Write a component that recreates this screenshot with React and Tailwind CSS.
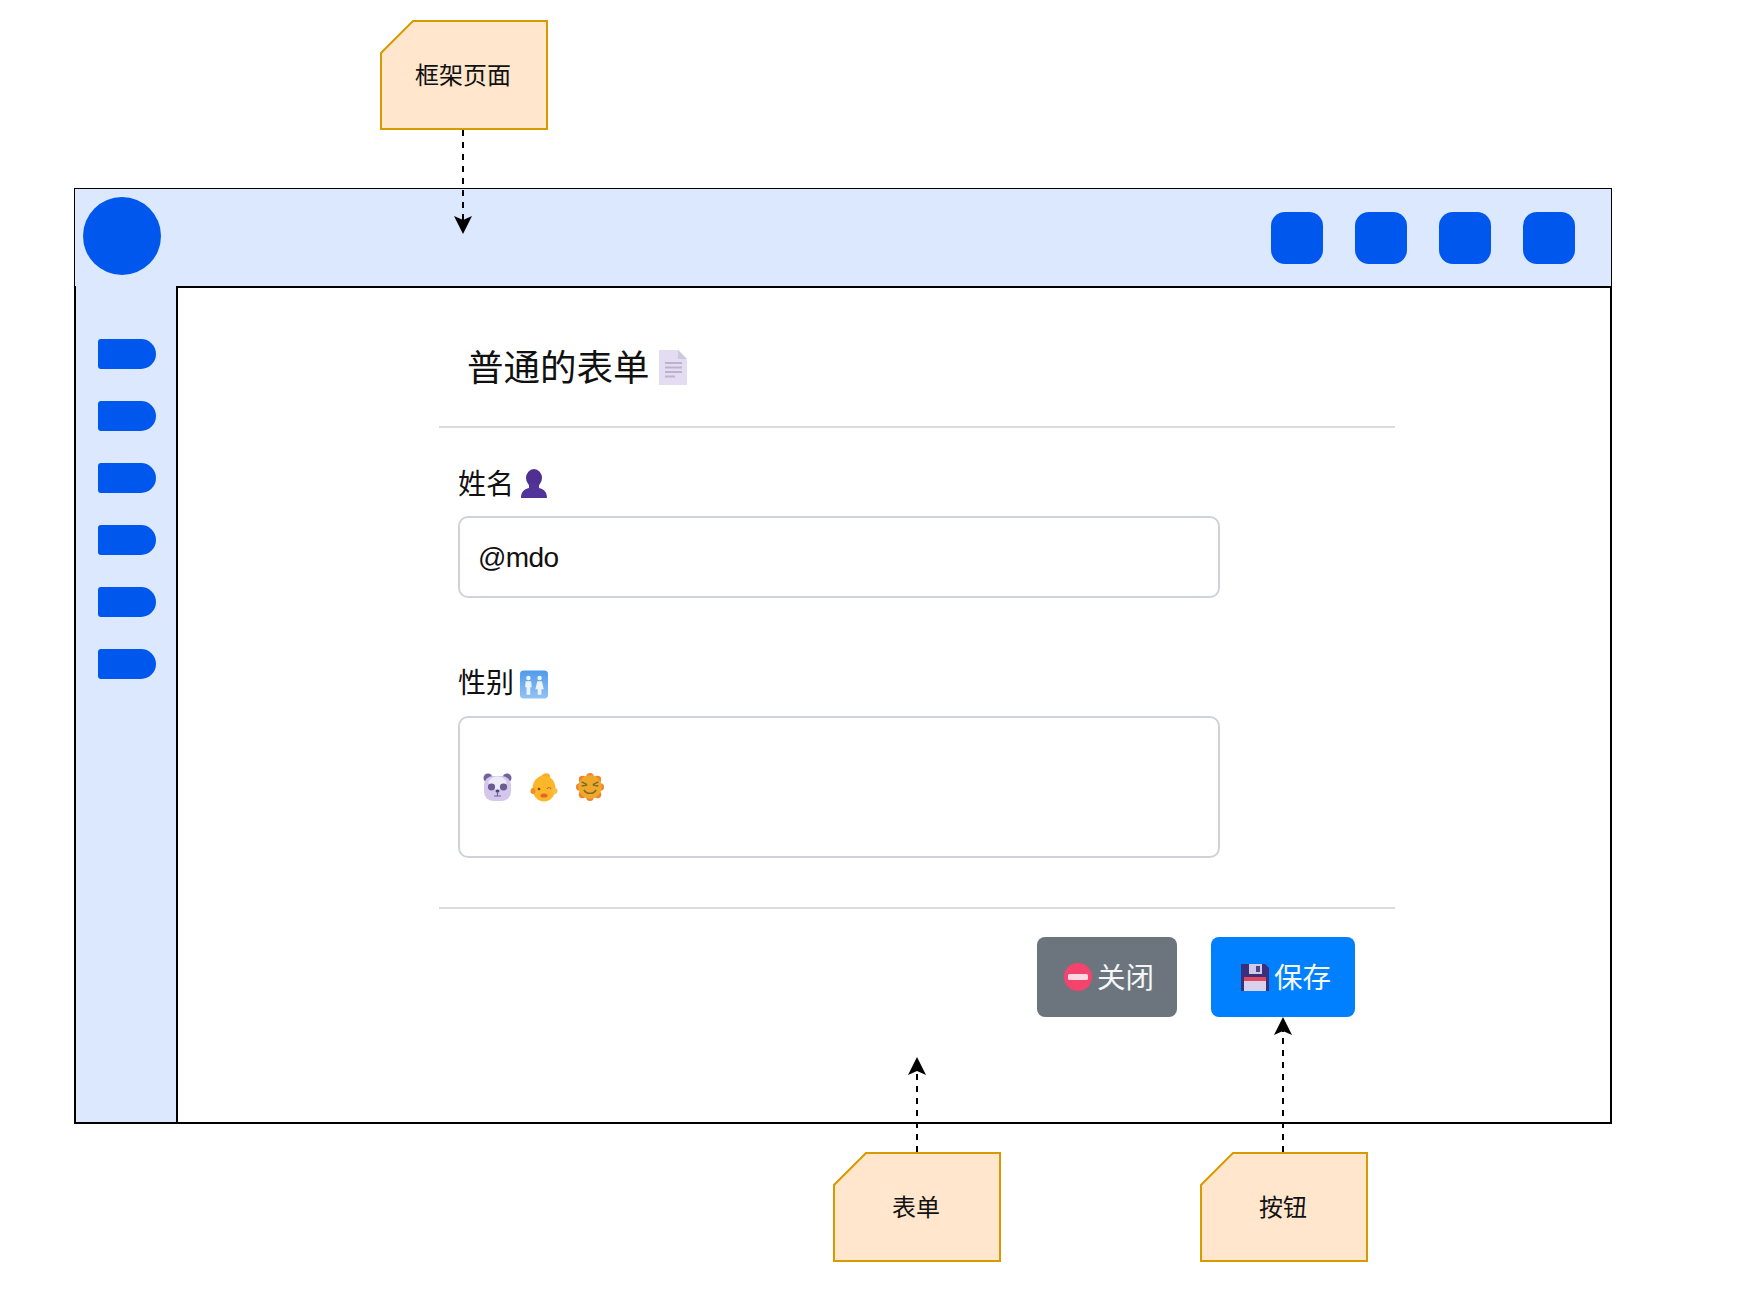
import React from 'react';

const FONT = 'font-["Liberation_Sans","Noto_Sans_CJK_SC",sans-serif]';

const Note = ({ label }) => (
  <div className="relative w-[168px] h-[110px] flex items-center justify-center">
    <svg className="absolute inset-0" width="168" height="110" viewBox="0 0 168 110">
      <path d="M33 1H167V109H1V33Z" fill="#ffe6cc" stroke="#d79b00" strokeWidth="2" />
    </svg>
    <span className="relative text-[24px] leading-none text-[#111] mt-[1px] -ml-[2px]">{label}</span>
  </div>
);

const Arrow = ({ x, top, height, up }) => (
  <svg className="absolute" style={{ left: x - 10, top }} width="20" height={height} viewBox={`0 0 20 ${height}`}>
    {up ? (
      <>
        <line x1="10" y1={height} x2="10" y2="14" stroke="#000" strokeWidth="2" strokeDasharray="6 6" />
        <path d="M10 0L19 18L10 14L1 18Z" fill="#000" />
      </>
    ) : (
      <>
        <line x1="10" y1="0" x2="10" y2={height - 14} stroke="#000" strokeWidth="2" strokeDasharray="6 6" />
        <path d={`M10 ${height}L1 ${height - 18}L10 ${height - 14}L19 ${height - 18}Z`} fill="#000" />
      </>
    )}
  </svg>
);

const FileEmoji = () => (
  <svg className="blur-[0.5px]" width="30" height="37" viewBox="0 0 30 37">
    <path d="M1 1H20L29 10V36H1Z" fill="#e4ddf1" />
    <path d="M20 1L29 10H20Z" fill="#cfc6e2" />
    <path d="M7 14H24M7 18.5H24M7 23H24M7 27.5H17" stroke="#bdb1d2" strokeWidth="2" />
  </svg>
);

const UserEmoji = () => (
  <svg className="blur-[0.5px] -mt-[3px]" width="28" height="30" viewBox="0 0 28 30">
    <ellipse cx="14" cy="9" rx="8" ry="9" fill="#4f2f8f" />
    <path d="M9 14H19V19C24 20 27 23 27 29H1C1 23 4 20 9 19Z" fill="#52339a" />
  </svg>
);

const RestroomEmoji = () => (
  <svg className="blur-[0.5px]" width="28" height="29" viewBox="0 0 30 30">
    <defs>
      <linearGradient id="restroomBg" x1="0" y1="0" x2="0" y2="1">
        <stop offset="0" stopColor="#4f9aec" />
        <stop offset="1" stopColor="#93c2f5" />
      </linearGradient>
    </defs>
    <rect width="30" height="30" rx="4" fill="url(#restroomBg)" />
    <circle cx="9" cy="8" r="2.4" fill="#eef4fd" />
    <circle cx="21" cy="8" r="2.4" fill="#eef4fd" />
    <path d="M6 11.5H12L12.5 18H11V26H7V18H5.5Z" fill="#eef4fd" />
    <path d="M18.5 11.5H23.5L25.5 20H23V26H19V20H16.5Z" fill="#eef4fd" />
  </svg>
);

const PandaEmoji = () => (
  <svg className="blur-[0.6px]" width="29" height="28" viewBox="0 0 29 28">
    <circle cx="5" cy="5" r="4.5" fill="#6f6398" />
    <circle cx="24" cy="5" r="4.5" fill="#6f6398" />
    <rect x="1" y="3" width="27" height="25" rx="9" fill="#d3c7ec" />
    <ellipse cx="14.5" cy="10" rx="9" ry="6.5" fill="#efeaf8" />
    <ellipse cx="8.5" cy="14" rx="3.6" ry="3.4" fill="#685c90" />
    <ellipse cx="20.5" cy="14" rx="3.6" ry="3.4" fill="#685c90" />
    <ellipse cx="14.5" cy="18" rx="2" ry="1.5" fill="#4f4578" />
    <path d="M14.5 19V23M11 23H18" stroke="#6f6398" strokeWidth="1.2" />
  </svg>
);

const ChickEmoji = () => (
  <svg className="blur-[0.6px]" width="28" height="29" viewBox="0 0 28 29">
    <path d="M10 5C12 -1 20 -1 20 3C20 6 18 8 16 8Z" fill="#f9ab1f" />
    <ellipse cx="14" cy="15.5" rx="11.5" ry="13" fill="#fbb62a" />
    <ellipse cx="3" cy="18" rx="2.5" ry="3" fill="#f08e2f" />
    <ellipse cx="25" cy="18" rx="2.5" ry="3" fill="#f3c24a" />
    <circle cx="9" cy="16" r="1.3" fill="#7a4a1e" />
    <path d="M17 16C18 14 20 14 21 16" stroke="#b37a2a" strokeWidth="1.2" fill="none" />
    <ellipse cx="14" cy="22.5" rx="3.5" ry="2" fill="#e8602c" />
  </svg>
);

const SunEmoji = () => (
  <svg className="blur-[0.6px]" width="28" height="28" viewBox="0 0 30 30">
    <g fill="#f2812c">
      <circle cx="15" cy="4" r="4" />
      <circle cx="15" cy="26" r="4" />
      <circle cx="4" cy="15" r="4" />
      <circle cx="26" cy="15" r="4" />
      <circle cx="7" cy="7" r="4" />
      <circle cx="23" cy="7" r="4" />
      <circle cx="7" cy="23" r="4" />
      <circle cx="23" cy="23" r="4" />
    </g>
    <circle cx="15" cy="15" r="12.5" fill="#efa92a" />
    <path d="M6 9.5L12 12.5M24 9.5L18 12.5M6 14L12 13M24 14L18 13" stroke="#7e6a2a" strokeWidth="1.6" fill="none" />
    <path d="M8.5 18C11 23 19 23 21.5 18" stroke="#7e6a2a" strokeWidth="1.6" fill="none" />
  </svg>
);

const NoEntryEmoji = () => (
  <svg className="blur-[0.5px]" width="28" height="28" viewBox="0 0 28 28">
    <circle cx="14" cy="14" r="14" fill="#f4436c" />
    <rect x="4" y="11" width="20" height="6" rx="1.5" fill="#fbd9e2" />
  </svg>
);

const FloppyEmoji = () => (
  <svg className="blur-[0.5px]" width="28" height="28" viewBox="0 0 28 28">
    <path d="M0 1H24L28 5V28H0Z" fill="#3a2f7c" />
    <rect x="8" y="1" width="13" height="10" fill="#cfc9e6" />
    <rect x="15" y="3" width="4" height="6" fill="#4d4490" />
    <rect x="3" y="14" width="22" height="14" fill="#d9d0ee" />
    <rect x="3" y="14" width="22" height="4" fill="#e0465c" />
  </svg>
);

const ActionButton = ({ icon, label, className }) => (
  <button className={`h-[80px] rounded-lg flex items-center text-[28.5px] leading-none text-[#f4f6f8] ${className}`}>
    {icon}
    <span className="ml-[5px] mt-[2px]">{label}</span>
  </button>
);

const App = () => {
  return (
    <div className={`relative w-[1740px] h-[1310px] bg-white overflow-hidden pt-[20px] ${FONT}`}>
      <div className="pl-[380px]">
        <Note label="框架页面" />
      </div>

      <div className="ml-[74px] mt-[58px] w-[1538px] h-[936px] flex flex-col">
        <header className="h-[98px] shrink-0 bg-[#dbe8fe] border border-b-0 border-black flex items-start justify-between pl-[8px] pr-[36px]">
          <div className="mt-[8px] w-[78px] h-[78px] rounded-full bg-[#0057ee]" />
          <div className="mt-[23px] flex gap-[32px]">
            {[0, 1, 2, 3].map((i) => (
              <div key={i} className="w-[52px] h-[52px] rounded-[14px] bg-[#0057ee]" />
            ))}
          </div>
        </header>

        <div className="flex-1 flex min-h-0">
          <aside className="w-[102px] shrink-0 bg-[#dbe8fe] border-l-2 border-b-2 border-black pl-[22px] pt-[53px] flex flex-col gap-[32px]">
            {[0, 1, 2, 3, 4, 5].map((i) => (
              <div key={i} className="w-[58px] h-[30px] rounded-l-[3px] rounded-r-[15px] bg-[#0057ee]" />
            ))}
          </aside>

          <main className="flex-1 bg-white border-2 border-black pl-[261px] text-[#111]">
            <div className="w-[956px]">
              <div className="h-[140px] border-b-2 border-[#dcdce0] pl-[28px] pt-[61px] flex items-start gap-[8px]">
                <h1 className="text-[36.5px] leading-[40px] font-normal">普通的表单</h1>
                <FileEmoji />
              </div>

              <div className="pl-[19px] pt-[40px]">
                <label className="flex items-center gap-[6px] h-[34px] text-[28px] leading-none">
                  姓名
                  <UserEmoji />
                </label>
                <div className="mt-[14px] w-[762px] h-[82px] rounded-[10px] border-2 border-[#cfd3d9] flex items-center pl-[18px] text-[28px] tracking-[-0.6px]">
                  <span className="mt-[2px]">@mdo</span>
                </div>

                <label className="mt-[69px] flex items-center gap-[6px] h-[34px] text-[28px] leading-none">
                  性别
                  <RestroomEmoji />
                </label>
                <div className="mt-[15px] w-[762px] h-[142px] rounded-[10px] border-2 border-[#cfd3d9] flex items-center pl-[23px] gap-[18px]">
                  <PandaEmoji />
                  <ChickEmoji />
                  <SunEmoji />
                </div>
              </div>

              <div className="mt-[49px] border-t-2 border-[#dcdce0] pt-[28px] pl-[598px] flex gap-[34px]">
                <ActionButton
                  icon={<NoEntryEmoji />}
                  label="关闭"
                  className="w-[140px] pl-[27px] bg-[#6c757d]"
                />
                <ActionButton
                  icon={<FloppyEmoji />}
                  label="保存"
                  className="w-[144px] pl-[30px] bg-[#0080ff]"
                />
              </div>
            </div>
          </main>
        </div>
      </div>

      <div className="mt-[28px] pl-[833px] flex gap-[199px]">
        <Note label="表单" />
        <Note label="按钮" />
      </div>

      <Arrow x={463} top={130} height={104} />
      <Arrow x={917} top={1057} height={95} up />
      <Arrow x={1283} top={1017} height={135} up />
    </div>
  );
};

export default App;
